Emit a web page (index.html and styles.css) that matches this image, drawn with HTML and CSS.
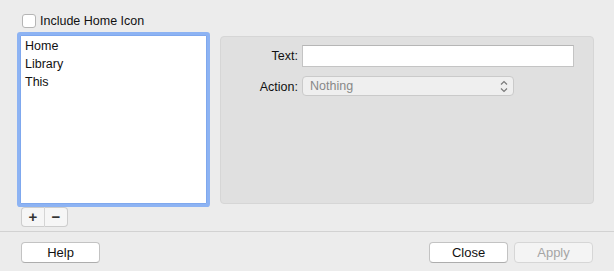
FILE: index.html
```html
<!DOCTYPE html>
<html lang="en">
<head>
<meta charset="UTF-8" />
<title>Toolbar Items</title>
<link rel="stylesheet" href="styles.css">
</head>
<body>
<div class="window">
  <label class="check-row"><span class="checkbox"></span> Include Home Icon</label>

  <div class="main">
    <div class="list-col">
      <div class="list">
        <div class="item">Home</div>
        <div class="item">Library</div>
        <div class="item">This</div>
      </div>
      <div class="seg">
        <button class="seg-btn">+</button><button class="seg-btn">&minus;</button>
      </div>
    </div>

    <div class="panel">
      <div class="row">
        <span class="lbl">Text:</span>
        <input class="field" type="text" />
      </div>
      <div class="row">
        <span class="lbl">Action:</span>
        <div class="popup">
          <span>Nothing</span>
          <svg width="8" height="13" viewBox="0 0 8 13"><path d="M1 4.5 L4 1.5 L7 4.5 M1 8.5 L4 11.5 L7 8.5" fill="none" stroke="#7a7a7a" stroke-width="1.2"/></svg>
        </div>
      </div>
    </div>
  </div>

  <div class="footer">
    <button class="btn">Help</button>
    <div class="spacer"></div>
    <button class="btn">Close</button>
    <button class="btn disabled">Apply</button>
  </div>
</div>
</body>
</html>
```

FILE: styles.css
```css
* { box-sizing: border-box; }
html, body {
  margin: 0; background: #ececec; color: #111;
  font-family: 'Liberation Sans', Arial, sans-serif; font-size: 12.5px;
}
.window {
  width: 614px; height: 271px; position: relative;
}
.check-row {
  display: flex; align-items: center; gap: 4px;
  padding: 13px 0 0 22px; height: 28px;
}
.checkbox {
  width: 14px; height: 14px; background: #fff;
  border: 1px solid #b5b5b5; border-radius: 3px;
}
.main {
  display: flex; margin-top: 7px; padding-left: 20px;
}
.list-col {
  width: 187px;
}
.list {
  height: 169px; background: #fff;
  border: 1px solid #7fa8ee; border-radius: 1px;
  box-shadow: 0 0 0 3px #8db3f3;
  padding: 1px 4px;
}
.item {
  height: 18px; line-height: 18px;
}
.seg {
  display: flex; margin: 3px 0 0 1px;
}
.seg-btn {
  width: 24px; height: 20px; padding: 0; margin: 0;
  background: #f6f6f6; border: 1px solid #cdcdcd;
  font: 700 15px 'Liberation Sans', Arial, sans-serif; color: #333;
  line-height: 16px;
}
.seg-btn:first-child { border-radius: 4px 0 0 4px; border-right: 1px solid #d5d5d5; }
.seg-btn:last-child { border-radius: 0 4px 4px 0; border-left: none; width: 23px; }
.panel {
  margin: 1px 0 0 13px; width: 374px; height: 168px;
  background: #e0e0e0; border: 1px solid #d6d6d6; border-radius: 4px;
  padding: 8px 0 0 0;
}
.row {
  display: flex; align-items: center; margin-bottom: 10px;
}
.lbl {
  width: 78px; text-align: right; padding-right: 1px; margin-right: 3px;
}
.field {
  width: 272px; height: 22px; margin: 0;
  background: #fff; border: 1px solid #c4c4c4; border-top-color: #b6b6b6;
  font: inherit; padding: 0 3px;
}
.popup {
  width: 212px; height: 20px; margin-top: -1px;
  display: flex; align-items: center; justify-content: space-between;
  background: #efefef; border: 1px solid #cacaca; border-radius: 4px;
  padding: 0 5px 0 7px; color: #888;
}
.footer {
  position: absolute; left: 0; right: 0; top: 231px; bottom: 0;
  border-top: 1px solid #d2d2d2;
  display: flex; align-items: flex-start;
  padding: 10px 21px 0 21px;
}
.spacer { flex: 1; }
.btn {
  width: 79px; height: 21px; margin: 0; padding: 0;
  background: #fff; border: 1px solid #c3c3c3; border-bottom-color: #adadad;
  border-radius: 4px; font: inherit; font-size: 13px; color: #111;
}
.btn + .btn { margin-left: 6px; }
.btn.disabled {
  background: #f4f4f4; border-color: #d6d6d6; color: #a5a5a5;
}
```
